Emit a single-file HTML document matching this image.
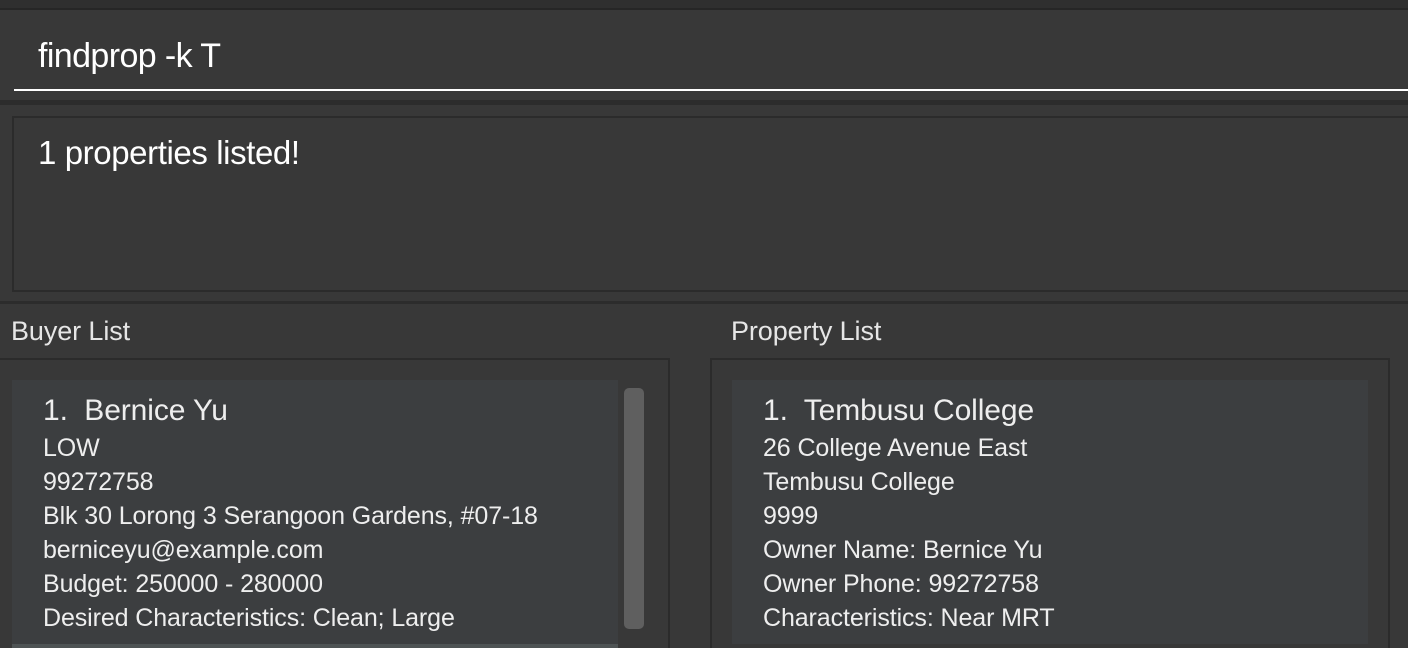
<!DOCTYPE html>
<html><head><style>
*{margin:0;padding:0;box-sizing:border-box}
html,body{width:1408px;height:648px;overflow:hidden}
body{background:#383838;position:relative;font-family:"Liberation Sans",sans-serif;color:#fff}
.a{position:absolute}
.t{position:absolute;white-space:nowrap}
</style></head><body>
<div class="a" style="left:0;top:0;width:1408px;height:9px;background:#2f2f2f"></div>
<div class="a" style="left:0;top:8px;width:1408px;height:2px;background:#262626"></div>
<div class="a" style="left:14px;top:89px;width:1394px;height:2px;background:#fff"></div>
<div class="a" style="left:0;top:100px;width:1408px;height:5px;background:#2c2c2c"></div>
<div class="a" style="left:12px;top:116px;width:1400px;height:176px;border:2px solid #2b2b2b"></div>
<div class="a" style="left:0;top:301px;width:1408px;height:3px;background:#2c2c2c"></div>
<div class="t" style="left:38px;top:37px;font-size:34px;letter-spacing:-0.6px">findprop -k T</div>
<div class="t" style="left:38px;top:134px;font-size:33px;letter-spacing:-0.4px">1 properties listed!</div>
<div class="t" style="left:11px;top:316px;font-size:27px;color:#e6e6e6;letter-spacing:-0.1px">Buyer List</div>
<div class="t" style="left:731px;top:316px;font-size:27px;color:#e6e6e6;letter-spacing:-0.1px">Property List</div>
<div class="a" style="left:-2px;top:358px;width:672px;height:300px;border:2px solid #2b2b2b"></div>
<div class="a" style="left:710px;top:358px;width:680px;height:300px;border:2px solid #2b2b2b"></div>
<div class="a" style="left:12px;top:380px;width:606px;height:264px;background:#3c3e40"></div>
<div class="a" style="left:12px;top:644px;width:606px;height:4px;background:#4e5354"></div>
<div class="a" style="left:624px;top:388px;width:20px;height:241px;background:#5f5f5f;border-radius:5px"></div>
<div class="a" style="left:732px;top:380px;width:636px;height:264px;background:#3c3e40"></div>
<div style="position:absolute;left:43px;top:395px;font-size:25px;line-height:34px;color:#eee;letter-spacing:-0.1px;white-space:nowrap">
<div style="font-size:30px;line-height:32px;margin-bottom:4px">1.&nbsp; Bernice Yu</div>
<div>LOW</div><div>99272758</div><div>Blk 30 Lorong 3 Serangoon Gardens, #07-18</div><div>berniceyu@example.com</div><div>Budget: 250000 - 280000</div><div>Desired Characteristics: Clean; Large</div></div>
<div style="position:absolute;left:763px;top:395px;font-size:25px;line-height:34px;color:#eee;letter-spacing:-0.1px;white-space:nowrap">
<div style="font-size:30px;line-height:32px;margin-bottom:4px">1.&nbsp; Tembusu College</div>
<div>26 College Avenue East</div><div>Tembusu College</div><div>9999</div><div>Owner Name: Bernice Yu</div><div>Owner Phone: 99272758</div><div>Characteristics: Near MRT</div></div>
</body></html>
